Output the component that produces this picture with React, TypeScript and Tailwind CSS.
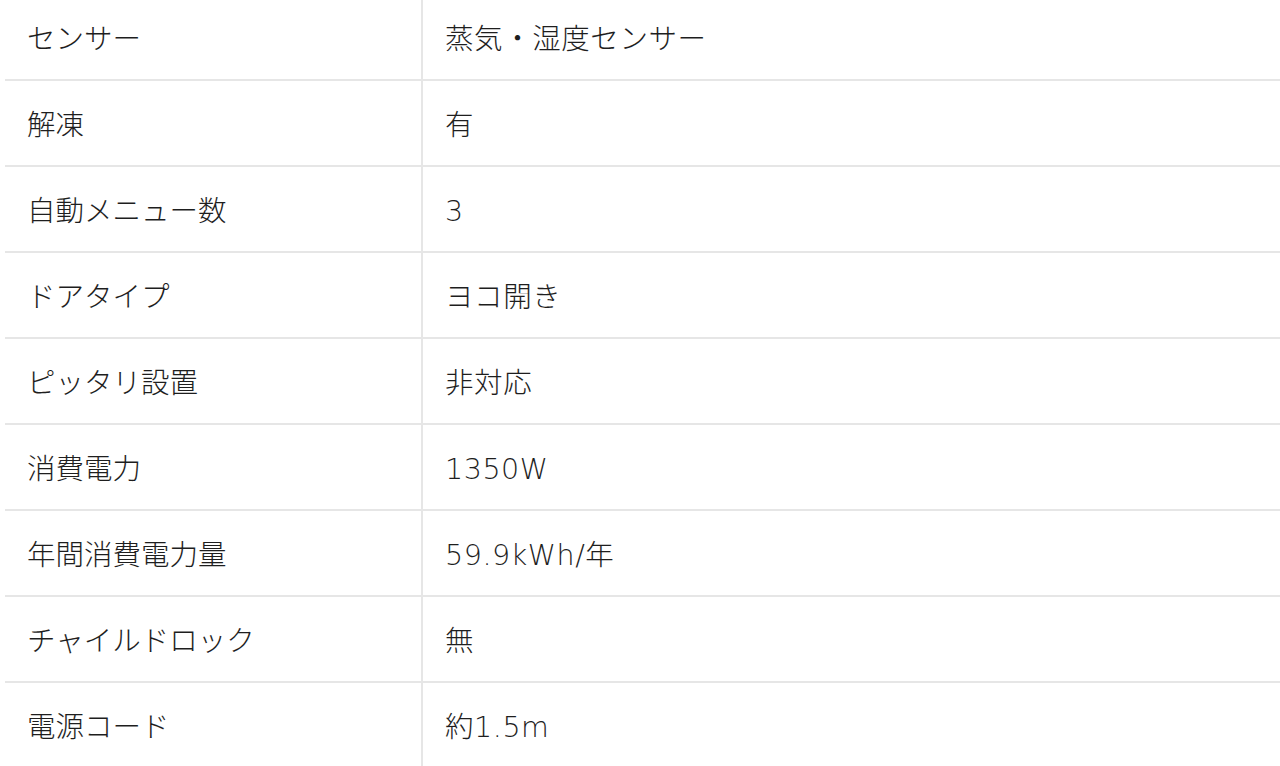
const rows: [string, string][] = [
  ["センサー", "蒸気・湿度センサー"],
  ["解凍", "有"],
  ["自動メニュー数", "3"],
  ["ドアタイプ", "ヨコ開き"],
  ["ピッタリ設置", "非対応"],
  ["消費電力", "1350W"],
  ["年間消費電力量", "59.9kWh/年"],
  ["チャイルドロック", "無"],
  ["電源コード", "約1.5m"],
];

const App = () => {
  return (
    <div
      className="h-[766px] overflow-hidden bg-white text-[#1e1e1e] pl-[5px]"
      style={{ fontFamily: '"Noto Sans CJK JP", "Noto Sans", sans-serif' }}
    >
      <div className="-mt-[5px]">
        {rows.map(([label, value]) => (
          <div key={label} className="flex h-[86px] border-b-2 border-[#e6e6e6]">
            <div className="w-[418px] shrink-0 border-r-2 border-[#e6e6e6] pl-[22px] flex items-center text-[28.5px] font-light">
              {label}
            </div>
            <div className="flex-1 pl-[22px] pt-[6px] flex items-center text-[28.5px] font-light tracking-[0.02em] font-['DejaVu_Sans','Noto_Sans_CJK_JP',sans-serif]">
              {value}
            </div>
          </div>
        ))}
      </div>
    </div>
  );
};

export default App;
